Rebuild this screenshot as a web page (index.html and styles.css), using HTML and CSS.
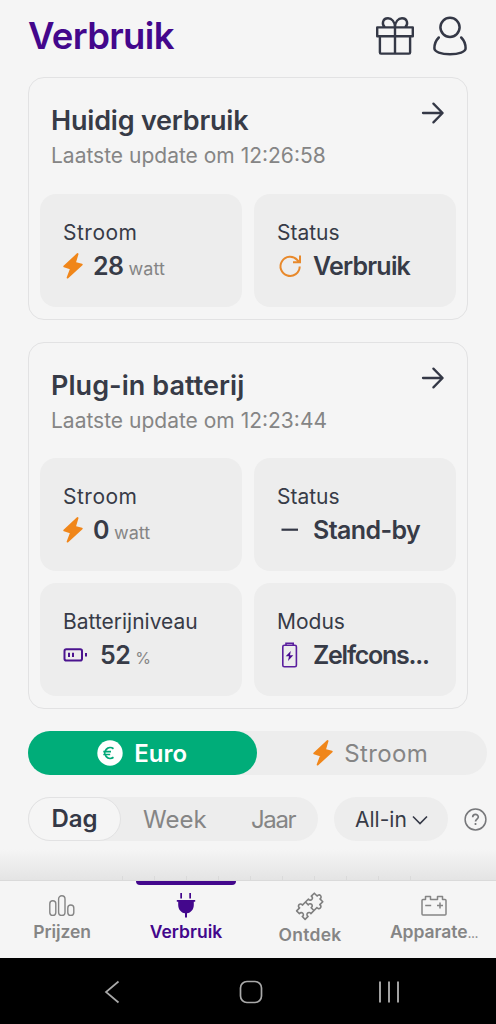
FILE: index.html
```
<!DOCTYPE html>
<html lang="nl">
<head>
<meta charset="utf-8">
<title>Verbruik</title>
<link rel="stylesheet" href="styles.css">
</head>
<body>
<svg class="defs" width="0" height="0">
  <symbol id="bolt" viewBox="0 0 20 26"><path d="M14.6 1 1.2 13.3 8 15.6 4.6 24.6 18.8 11.6 12 9.8Z" fill="#f0861a" stroke="#f0861a" stroke-width="1.8" stroke-linejoin="round"/></symbol>
  <symbol id="arrow" viewBox="0 0 24 24"><path d="M2 12H21M12.4 2.6 21.6 12 12.4 21.4" fill="none" stroke="#343846" stroke-width="2.3" stroke-linecap="round" stroke-linejoin="round"/></symbol>
</svg>
<main class="screen">
  <header class="top">
    <h1 class="title">Verbruik</h1>
    <svg class="gift" width="38" height="38" viewBox="0 0 38 38" fill="none" stroke="#343846" stroke-width="2.4" stroke-linejoin="round" stroke-linecap="round"><path d="M1.200 10.4H36.800V19.2H1.200ZM3.9 19.4V35.5Q3.9 36.6 5 36.6H33Q34.1 36.6 34.1 35.5V19.4M19 10.2V36.4M8.600 10C5.800 7.500 6.200 1.300 12 1.300 16 1.300 18.500 5 19 9.500M29.400 10C32.200 7.500 31.800 1.300 26 1.300 22 1.300 19.500 5 19 9.500"/></svg>
    <svg class="user" width="34" height="40" viewBox="0 0 34 40" fill="none" stroke="#343846" stroke-width="2.500" stroke-linecap="round"><circle cx="17" cy="11.300" r="9.600"/><path d="M5.800 21.500C2.800 24.500 1.400 29 1.400 32.300C1.400 35.800 8 38.200 17 38.200S32.600 35.800 32.600 32.300C32.600 29 31.200 24.500 28.200 21.500"/></svg>
  </header>

  <section class="card">
    <div class="card-head">
      <div>
        <h2 class="card-title t-huidig">Huidig verbruik</h2>
        <p class="updated">Laatste update om 12:26:58</p>
      </div>
      <svg class="arrow" width="24" height="24"><use href="#arrow"/></svg>
    </div>
    <div class="tiles">
      <div class="tile"><span class="label t-power">Stroom</span>
        <div class="value"><svg class="ic-bolt" width="20" height="26"><use href="#bolt"/></svg><b class="num">28</b><small class="unit">watt</small></div></div>
      <div class="tile"><span class="label">Status</span>
        <div class="value"><svg class="ic" width="26" height="26" viewBox="0 0 26 26" fill="none" stroke="#e8892b" stroke-width="2"><path d="M22.700 13.500A9.600 9.600 0 1 1 20.300 7L22.600 9.200M23 2.500V9.300H16"/></svg><b class="num t-use">Verbruik</b></div></div>
    </div>
  </section>

  <section class="card">
    <div class="card-head">
      <div>
        <h2 class="card-title t-plug">Plug-in batterij</h2>
        <p class="updated">Laatste update om 12:23:44</p>
      </div>
      <svg class="arrow" width="24" height="24"><use href="#arrow"/></svg>
    </div>
    <div class="tiles">
      <div class="tile"><span class="label t-power">Stroom</span>
        <div class="value"><svg class="ic-bolt" width="20" height="26"><use href="#bolt"/></svg><b class="num">0</b><small class="unit">watt</small></div></div>
      <div class="tile"><span class="label">Status</span>
        <div class="value"><svg class="ic" width="26" height="26" viewBox="0 0 26 26"><path d="M4.500 12.700H21" stroke="#343846" stroke-width="2.200"/></svg><b class="num t-standby">Stand-by</b></div></div>
      <div class="tile"><span class="label t-niveau">Batterijniveau</span>
        <div class="value"><svg class="ic-level" width="24" height="14" viewBox="0 0 24 14" fill="none" stroke="#4b148f" stroke-width="2"><rect x="1.500" y="1.200" width="17.500" height="11.400" rx="1.800"/><path d="M6 4.700V9M10 4.700V9M23 5V8.600"/></svg><b class="num">52</b><small class="unit pct">%</small></div></div>
      <div class="tile"><span class="label">Modus</span>
        <div class="value"><svg class="ic" width="26" height="26" viewBox="0 0 26 26" fill="none" stroke="#5a1f9e" stroke-width="1.600"><rect x="5.800" y="3.300" width="13.600" height="21.400" rx="1.500"/><path d="M9 3V1.200H16.200V3"/><path d="M13.800 9 8.700 14.300H12L11 19 16.300 13.200H13Z" fill="#4a0c92" stroke="none"/></svg><b class="num t-zelf">Zelfcons...</b></div></div>
    </div>
  </section>

  <div class="switch">
    <div class="opt on"><svg width="26" height="26" viewBox="0 0 26 26"><circle cx="13" cy="13" r="12.700" fill="#fff"/><path d="M16.500 8.700A5.400 5.400 0 1 0 16.500 17.300M6.300 11.700H14M6.300 14.500H13.200" fill="none" stroke="#00a878" stroke-width="1.700"/></svg><span class="t-euro">Euro</span></div>
    <div class="opt off"><svg width="20" height="26"><use href="#bolt"/></svg><span class="t-stroom">Stroom</span></div>
  </div>

  <div class="filters">
    <div class="range"><span class="day">Dag</span><span class="week">Week</span><span class="year">Jaar</span></div>
    <div class="price"><span>All-in</span><svg width="16" height="10" viewBox="0 0 16 10"><path d="M1 1.500 8 8.500 15 1.500" fill="none" stroke="#343846" stroke-width="1.600"/></svg></div>
    <svg class="help" width="23" height="23" viewBox="0 0 23 23" fill="none" stroke="#77787b" stroke-width="1.500"><circle cx="11.500" cy="11.500" r="10.400"/><path d="M8.700 9.200C8.700 5.500 14.300 5.600 14.300 9 14.300 11 11.500 11.200 11.500 13.500M11.500 15V16.900" stroke-width="1.700"/></svg>
  </div>
  <div class="fade"><i></i><i></i><i></i><i></i><i></i><i></i><i></i><i></i><i></i><i></i></div>
</main>

<nav class="tabs">
  <a class="tab"><svg width="26" height="22" viewBox="0 0 26 22" fill="none" stroke="#858585" stroke-width="1.400"><rect x=".8" y="5.800" width="6" height="14.600" rx="3"/><rect x="9.600" y=".8" width="6.400" height="19.600" rx="3.200"/><rect x="18.800" y="10" width="6" height="10.400" rx="3"/></svg><span class="n-prijzen">Prijzen</span></a>
  <a class="tab active"><svg width="20" height="26" viewBox="0 0 20 26" fill="#43078c"><path d="M4.300 1H6V6.500H4.300ZM13.300 1H15V6.500H13.300ZM.8 8H19.200V9.800H17.800V13C17.800 17.500 15 20.700 11 21.300V25.500H9V21.300C5 20.700 2.200 17.500 2.200 13V9.800H.8Z"/></svg><span class="n-verbruik">Verbruik</span></a>
  <a class="tab low"><svg width="30" height="30" viewBox="0 0 30 30" fill="none" stroke="#7e7e7e" stroke-width="1.600" stroke-linejoin="round"><g transform="translate(14.700 15.300) rotate(-45)"><path d="M-12.500-6H-8.300A2.100 2.100 0 1 1-4.300-6H0H4.300A2.100 2.100 0 1 0 8.300-6H12.500V-2A2.100 2.100 0 1 1 12.500 2V6H8.300A2.100 2.100 0 1 1 4.300 6H-4.300A2.100 2.100 0 1 0-8.300 6H-12.500V2A2.100 2.100 0 1 0-12.500-2ZM0-6V-2A2.100 2.100 0 1 1 0 2V6"/></g></svg><span class="n-ontdek">Ontdek</span></a>
  <a class="tab"><svg width="26" height="22" viewBox="0 0 26 22" fill="none" stroke="#858585" stroke-width="1.500" stroke-linejoin="round"><path d="M1 5.500Q1 4.500 2 4.500H4.500V1.500H9.500V4.500H16.500V1.500H21.500V4.500H24Q25 4.500 25 5.500V19Q25 20 24 20H2Q1 20 1 19ZM4.200 10.500H10.200M16 10.500H22M19 7.500V13.500"/></svg><span class="n-apparate">Apparate<small class="dots">...</small></span></a>
</nav>

<footer class="sysbar">
  <svg width="16" height="24" viewBox="0 0 16 24"><path d="M14.500 1.500 2 12 14.500 22.500" fill="none" stroke="#a9a9a9" stroke-width="1.700"/></svg>
  <svg class="home" width="24" height="24" viewBox="0 0 24 24"><rect x="1.500" y="1.500" width="21" height="21" rx="6.500" fill="none" stroke="#a9a9a9" stroke-width="1.700"/></svg>
  <svg width="22" height="24" viewBox="0 0 22 24"><path d="M2 1.500V22.500M11 1.500V22.500M20 1.500V22.500" stroke="#a9a9a9" stroke-width="1.900"/></svg>
</footer>
</body>
</html>
```

FILE: styles.css
```
* { box-sizing: border-box; }
body {
  margin: 0;
  width: 496px;
  height: 1024px;
  overflow: hidden;
  display: flex;
  flex-direction: column;
  background: #f5f5f5;
  color: #373b47;
  font-family: Inter, "Liberation Sans", sans-serif;
}
h1, h2, p { margin: 0; font-weight: 600; }
svg { display: block; flex: none; }
span, b, small { white-space: nowrap; }
.defs { position: absolute; }

.screen { height: 880px; flex: none; display: flex; flex-direction: column; padding: 0 9px 0 28px; }
.top { height: 77px; display: flex; align-items: flex-start; padding-right: 20px; }
.title { flex: 1; padding-top: 13px; font-size: 36.5px; line-height: 46px; letter-spacing: -0.650px; color: #43078c; }
.gift { margin-top: 17px; }
.user { margin: 16px 0 0 19px; }

.card { width: 440px; border: 1px solid #e2e2e3; border-radius: 16px; padding: 0 11px 12px; margin-bottom: 22px; }
.card-head { display: flex; justify-content: space-between; height: 116px; padding: 24px 11px 0 11px; }
.arrow { margin-top: -1px; }
.card-title { font-size: 27px; line-height: 38px; }
.t-huidig { letter-spacing: -0.200px; }
.t-plug { letter-spacing: 0.050px; }
.updated { font-size: 21px; line-height: 32px; font-weight: 400; color: #858585; letter-spacing: 0; }
.tiles { display: grid; grid-template-columns: 202px 202px; column-gap: 12px; row-gap: 12px; }
.tile { height: 113px; border-radius: 16px; background: #ededed; padding: 23px 0 0 23px; }
.label { display: block; font-size: 21px; line-height: 32px; }
.t-power { letter-spacing: 0.500px; }
.value { display: flex; align-items: center; height: 34px; }
.ic-bolt { margin-right: 10px; }
.ic { margin-right: 10px; }
.ic-level { margin-right: 13px; }
.num { font-size: 25px; line-height: 34px; font-weight: 600; letter-spacing: -0.500px; }
.t-use { letter-spacing: -0.800px; }
.t-standby { letter-spacing: -0.600px; }
.t-zelf { letter-spacing: -1.250px; }
.unit { font-size: 18px; line-height: 24px; color: #858585; margin: 5px 0 0 5px; }
.pct { font-size: 16px; margin-left: 5px; }

.card + .card .card-head { height: 115px; padding-top: 23.5px; }

.switch { display: flex; width: 459px; height: 44px; border-radius: 22px; background: #ededed; }
.opt { flex: 1; display: flex; align-items: center; justify-content: center; gap: 11px; border-radius: 22px; font-size: 24px; color: #858585; }
.on { background: #00ad79; color: #fff; font-weight: 600; }
.off { padding-right: 2px; }
.t-stroom { letter-spacing: 0.400px; }

.filters { display: flex; align-items: center; height: 44px; margin-top: 22px; }
.range { display: flex; align-items: center; width: 290px; height: 44px; border-radius: 22px; background: #ededed; font-size: 24px; color: #858585; }
.day { width: 93px; height: 44px; line-height: 41px; text-align: center; border: 1px solid #e2e2e3; border-radius: 22px; background: #f5f5f5; color: #343846; font-weight: 600; }
.week { margin-left: 22px; width: 108px; }
.year { letter-spacing: -1.400px; }
.price { display: flex; align-items: center; justify-content: space-between; width: 114px; height: 44px; margin-left: 16px; padding: 1px 20px 0 21px; border-radius: 22px; background: #ededed; font-size: 21px; }
.help { margin-left: 16px; }
.fade { flex: 1; margin: 0 -9px 0 -28px; padding-left: 122px; display: flex; align-items: flex-end; gap: 31px; background: linear-gradient(#f5f5f5 20%, #e4e4e4); }
.fade i { width: 1px; height: 4px; background: #dadada; }

.tabs { height: 78px; flex: none; display: flex; border-top: 1px solid #dadada; background: #f5f5f5; }
.tab { width: 124px; height: 77px; display: flex; flex-direction: column; align-items: center; padding-top: 14px; color: #858585; font-size: 17.5px; font-weight: 600; line-height: 24px; }
.tab span { margin-top: 3px; }
.tab .n-prijzen { letter-spacing: -0.100px; }
.tab .n-apparate { letter-spacing: -0.050px; }
.dots { font-size: 14px; font-weight: 400; letter-spacing: -0.500px; }
.active { color: #43078c; padding-top: 0; }
.active::before { content: ""; width: 100px; height: 4px; margin: 0 0 7px; border-radius: 0 0 4px 4px; background: #43078c; }
.tab.active span { margin-top: 2px; }
.low { padding-top: 10px; }
.tab.low span { margin-top: 2px; letter-spacing: 0.300px; }
.sysbar { flex: 1; display: flex; justify-content: space-between; padding: 22px 96px 0 104px; background: #000; }
.home { margin-left: 3px; }
```
